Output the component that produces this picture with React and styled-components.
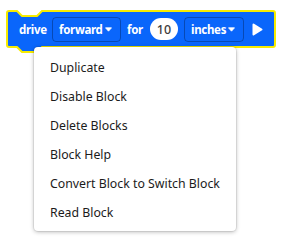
import React from 'react'
import styled, { createGlobalStyle } from 'styled-components'

const Global = createGlobalStyle`
  body {
    margin: 0;
    background: #ffffff;
    font-family: "Noto Sans", "Open Sans", sans-serif;
  }
`

const Page = styled.div`
  width: 284px;
  height: 244px;
  padding: 10px 0 0 6px;
  box-sizing: border-box;
`

const Block = styled.div`
  position: relative;
  width: 270px;
  height: 38px;
  display: flex;
  align-items: center;
  gap: 6px;
  padding: 0 0 0 13px;
  box-sizing: border-box;
  color: #fff;
  font-size: 11.5px;
  letter-spacing: -0.3px;
  font-weight: 700;
  white-space: nowrap;
`

const Shape = styled.svg`
  position: absolute;
  left: 0;
  top: 0;
  overflow: visible;
  z-index: 0;
`

const Label = styled.span`
  position: relative;
  z-index: 1;
  flex: none;
  width: ${({ $w }) => $w}px;
`

const Dropdown = styled.div`
  position: relative;
  z-index: 1;
  flex: none;
  display: flex;
  align-items: center;
  justify-content: space-between;
  height: 25px;
  width: ${({ $w }) => $w}px;
  padding: 0 8px 0 6px;
  box-sizing: border-box;
  border: 1px solid rgba(0, 0, 0, 0.28);
  border-radius: 4px;
`

const Caret = styled.svg`
  flex: none;
`

const Pill = styled.div`
  position: relative;
  z-index: 1;
  flex: none;
  width: 28px;
  height: 22px;
  border-radius: 11px;
  background: #fff;
  color: #3c3c3c;
  display: flex;
  align-items: center;
  justify-content: center;
  font-weight: 500;
  font-size: 12.5px;
  letter-spacing: 0;
`

const Play = styled.svg`
  position: relative;
  z-index: 1;
  flex: none;
  margin-left: 2px;
`

const Menu = styled.ul`
  position: relative;
  z-index: 2;
  list-style: none;
  margin: -1px 0 0 28px;
  padding: 6px 0 4px;
  width: 202px;
  background: #fff;
  border-radius: 4px;
  box-shadow: 0 0 0 1px rgba(0, 0, 0, 0.06), 0 1px 4px rgba(0, 0, 0, 0.28);
`

const Item = styled.li`
  height: 29px;
  line-height: 29px;
  padding-left: 16px;
  font-size: 12.3px;
  color: #1b1b1b;
`

const items = [
  'Duplicate',
  'Disable Block',
  'Delete Blocks',
  'Block Help',
  'Convert Block to Switch Block',
  'Read Block',
]

function DownCaret() {
  return (
    <Caret width="7" height="5" viewBox="0 0 7 5">
      <path d="M0.5 0.8 H6.5 L3.5 4.2 Z" fill="#fff" strokeLinejoin="round" stroke="#fff" strokeWidth="0.8" />
    </Caret>
  )
}

export default function App() {
  return (
    <Page>
      <Global />
      <Block>
        <Shape width="270" height="44" viewBox="0 0 270 44">
          <path
            d="M1 3 Q1 1 3 1 H11 L16 6 H31 L36 1 H267 Q269 1 269 3 V35 Q269 37 267 37 H36 L31 42 H16 L11 37 H3 Q1 37 1 35 Z"
            fill="#0a66fb"
            stroke="#f7ec00"
            strokeWidth="2"
            strokeLinejoin="round"
          />
        </Shape>
        <Label $w={27}>drive</Label>
        <Dropdown $w={69}>
          forward
          <DownCaret />
        </Dropdown>
        <Label $w={17}>for</Label>
        <Pill>10</Pill>
        <Dropdown $w={60}>
          inches
          <DownCaret />
        </Dropdown>
        <Play width="11" height="13" viewBox="0 0 11 13">
          <path d="M1.5 1.5 L9.5 6.5 L1.5 11.5 Z" fill="#fff" stroke="#fff" strokeWidth="2" strokeLinejoin="round" />
        </Play>
      </Block>
      <Menu>
        {items.map((t) => (
          <Item key={t}>{t}</Item>
        ))}
      </Menu>
    </Page>
  )
}
